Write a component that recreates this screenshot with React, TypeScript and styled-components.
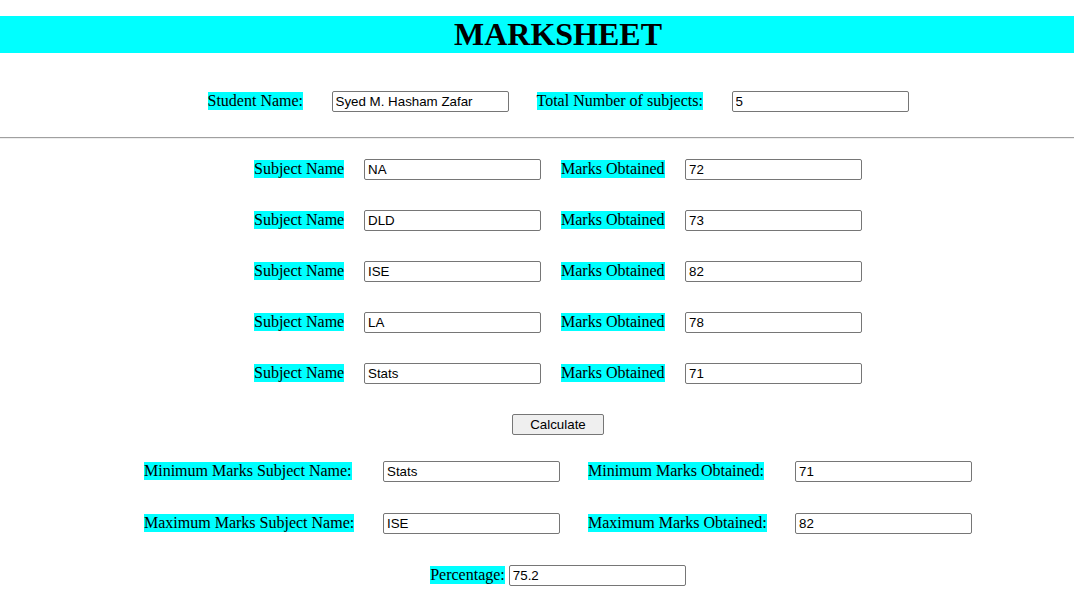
import React from "react";
import styled, { createGlobalStyle } from "styled-components";

const GlobalStyle = createGlobalStyle`
  html, body { margin: 0; padding: 0; background: #fff; }
  body {
    font-family: "Liberation Serif", "Times New Roman", serif;
    font-size: 16px;
    color: #000;
    overflow: hidden;
  }
  * { box-sizing: border-box; }
`;

const Page = styled.div`
  padding-top: 16px;
  width: 1074px;
`;

const Header = styled.h1`
  margin: 0;
  padding-left: 42px;
  background: #00ffff;
  text-align: center;
  font-family: "Liberation Serif", "Times New Roman", serif;
  font-size: 32px;
  font-weight: bold;
  line-height: 37px;
  height: 37px;
`;

const Section = styled.div<{ $top: number }>`
  padding-left: 42px;
  margin-top: ${(p) => p.$top}px;
  display: flex;
  justify-content: center;
`;

const FormGrid = styled.div<{ $cols: string; $colGap: number; $rowGap: number }>`
  display: grid;
  grid-template-columns: ${(p) => p.$cols};
  column-gap: ${(p) => p.$colGap}px;
  row-gap: ${(p) => p.$rowGap}px;
  align-items: baseline;
`;

const Label = styled.span`
  justify-self: start;
  background: #00ffff;
  white-space: nowrap;
  line-height: normal;
`;

const Field = styled.input`
  width: 177px;
  height: 21px;
  padding: 1px 3px;
  border: 1px solid #767676;
  border-radius: 2px;
  font-family: "Liberation Sans", Arial, sans-serif;
  font-size: 13.33px;
  color: #000;
  background: #fff;
  outline: none;
`;

const Rule = styled.hr`
  margin: 25px 0 20px;
  border: none;
  border-top: 1px solid #a0a0a0;
  border-bottom: 1px solid #eeeeee;
  height: 0;
`;

const Button = styled.button`
  width: 92px;
  height: 21px;
  padding: 0;
  background: #efefef;
  border: 1px solid #767676;
  border-radius: 2px;
  font-family: "Liberation Sans", Arial, sans-serif;
  font-size: 13.33px;
  color: #000;
`;

const InlineRow = styled.div`
  display: flex;
  align-items: baseline;
  gap: 4px;
`;

const subjects = [
  { name: "NA", marks: "72" },
  { name: "DLD", marks: "73" },
  { name: "ISE", marks: "82" },
  { name: "LA", marks: "78" },
  { name: "Stats", marks: "71" },
];

export default function App() {
  return (
    <>
      <GlobalStyle />
      <Page>
        <Header>MARKSHEET</Header>

        <Section $top={38}>
          <FormGrid $cols="96px 177px 167px 177px" $colGap={28} $rowGap={0}>
            <Label>Student Name:</Label>
            <Field defaultValue="Syed M. Hasham Zafar" />
            <Label>Total Number of subjects:</Label>
            <Field defaultValue="5" />
          </FormGrid>
        </Section>

        <Rule />

        <Section $top={0}>
          <FormGrid $cols="90px 177px 104px 177px" $colGap={20} $rowGap={30}>
            {subjects.map((s) => (
              <React.Fragment key={s.name}>
                <Label>Subject Name</Label>
                <Field defaultValue={s.name} />
                <Label>Marks Obtained</Label>
                <Field defaultValue={s.marks} />
              </React.Fragment>
            ))}
          </FormGrid>
        </Section>

        <Section $top={30}>
          <Button>Calculate</Button>
        </Section>

        <Section $top={26}>
          <FormGrid $cols="211px 177px 179px 177px" $colGap={28} $rowGap={31}>
            <Label>Minimum Marks Subject Name:</Label>
            <Field defaultValue="Stats" />
            <Label>Minimum Marks Obtained:</Label>
            <Field defaultValue="71" />
            <Label>Maximum Marks Subject Name:</Label>
            <Field defaultValue="ISE" />
            <Label>Maximum Marks Obtained:</Label>
            <Field defaultValue="82" />
          </FormGrid>
        </Section>

        <Section $top={31}>
          <InlineRow>
            <Label>Percentage:</Label>
            <Field defaultValue="75.2" />
          </InlineRow>
        </Section>
      </Page>
    </>
  );
}
